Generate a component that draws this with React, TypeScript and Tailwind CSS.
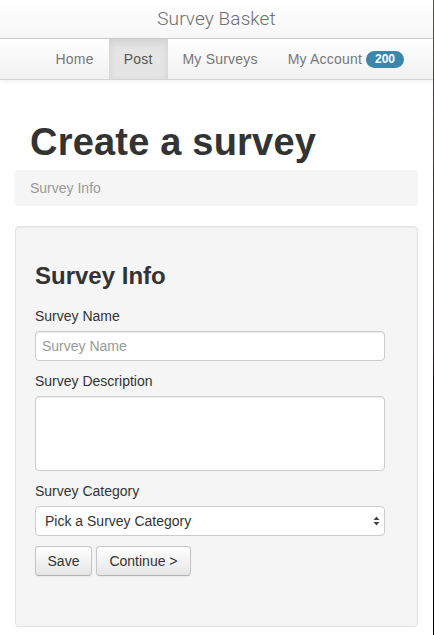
import React from "react";

export default function App() {
  const font = { fontFamily: '"Liberation Sans", Arial, sans-serif' };
  return (
    <div className="flex w-[434px] h-[635px] overflow-hidden bg-white" style={font}>
      <div className="w-[433px] flex flex-col">
        {/* Header */}
        <div className="h-[39px] flex items-center justify-center bg-gradient-to-b from-white to-[#f7f7f7] border-b border-[#cfcfcf]">
          <span className="text-[19px] font-light text-[#6f6f6f] tracking-[0.1px]" style={{ fontFamily: 'Roboto, "Liberation Sans", sans-serif' }}>
            Survey Basket
          </span>
        </div>
        {/* Nav */}
        <div className="h-[41px] flex justify-end pr-[14px] bg-gradient-to-b from-white to-[#f1f1f1] border-b border-[#d4d4d4] shadow-[0_1px_4px_rgba(0,0,0,0.07)]">
          <a className="px-[15px] flex items-center text-[14px] text-[#777] tracking-[0.2px]">Home</a>
          <a className="px-[15px] flex items-center text-[14px] text-[#555] bg-[#e5e5e5] shadow-[inset_0_3px_8px_rgba(0,0,0,0.1)] tracking-[0.2px]">Post</a>
          <a className="px-[15px] flex items-center text-[14px] text-[#777] tracking-[0.2px]">My Surveys</a>
          <a className="px-[15px] flex items-center text-[14px] text-[#777] tracking-[0.2px]">
            My Account
            <span className="ml-[4px] h-[17px] w-[38px] rounded-full bg-[#3a87ad] text-white text-[12px] font-bold flex items-center justify-center leading-none tracking-normal">
              200
            </span>
          </a>
        </div>
        {/* Content */}
        <div className="px-[15px]">
          <h1 className="mt-[42px] pl-[15px] text-[38px] leading-[40px] font-bold text-[#333] tracking-[0.2px]">Create a survey</h1>
          <div className="mt-[8px] h-[36px] rounded-[4px] bg-[#f5f5f5] px-[15px] flex items-center text-[14px] text-[#999]">
            Survey Info
          </div>
          <div className="mt-[20px] h-[401px] rounded-[4px] bg-[#f5f5f5] border border-[#e3e3e3] shadow-[inset_0_1px_1px_rgba(0,0,0,0.05)] px-[19px] pt-[19px]">
            <h2 className="my-[10px] text-[24px] leading-[40px] font-bold text-[#333]">Survey Info</h2>
            <label className="block text-[14px] leading-[20px] text-[#333] mb-[5px]">Survey Name</label>
            <input
              placeholder="Survey Name"
              className="block w-[350px] h-[30px] bg-white border border-[#ccc] rounded-[4px] px-[6px] text-[14px] text-[#555] placeholder:text-[#999] shadow-[inset_0_1px_1px_rgba(0,0,0,0.075)] outline-none"
            />
            <label className="block mt-[10px] text-[14px] leading-[20px] text-[#333] mb-[5px]">Survey Description</label>
            <textarea className="block w-[350px] h-[75px] bg-white border border-[#ccc] rounded-[4px] resize-none shadow-[inset_0_1px_1px_rgba(0,0,0,0.075)] outline-none" />
            <label className="block mt-[10px] text-[14px] leading-[20px] text-[#333] mb-[5px]">Survey Category</label>
            <div className="relative w-[350px] h-[30px] bg-white border border-[#ccc] rounded-[4px] flex items-center pl-[9px] text-[14px] text-[#333]">
              Pick a Survey Category
              <svg className="absolute right-[4px] top-[8px]" width="7" height="12" viewBox="0 0 7 12">
                <path d="M3.5 1.5 L6.5 5 L0.5 5 Z" fill="#444" />
                <path d="M3.5 10.5 L6.5 7 L0.5 7 Z" fill="#444" />
              </svg>
            </div>
            <div className="mt-[10px] flex gap-[4px]">
              <button className="h-[30px] w-[57px] rounded-[4px] border border-[#c5c5c5] border-b-[#b3b3b3] bg-gradient-to-b from-white to-[#e6e6e6] text-[14px] text-[#333] shadow-[inset_0_1px_0_rgba(255,255,255,0.2),0_1px_2px_rgba(0,0,0,0.05)]">
                Save
              </button>
              <button className="h-[30px] w-[95px] rounded-[4px] border border-[#c5c5c5] border-b-[#b3b3b3] bg-gradient-to-b from-white to-[#e6e6e6] text-[14px] text-[#333] shadow-[inset_0_1px_0_rgba(255,255,255,0.2),0_1px_2px_rgba(0,0,0,0.05)]">
                Continue &gt;
              </button>
            </div>
          </div>
        </div>
      </div>
      <div className="w-[1px] h-full bg-gradient-to-b from-[#7a4a3a] via-[#2a1a14] to-black" />
    </div>
  );
}
